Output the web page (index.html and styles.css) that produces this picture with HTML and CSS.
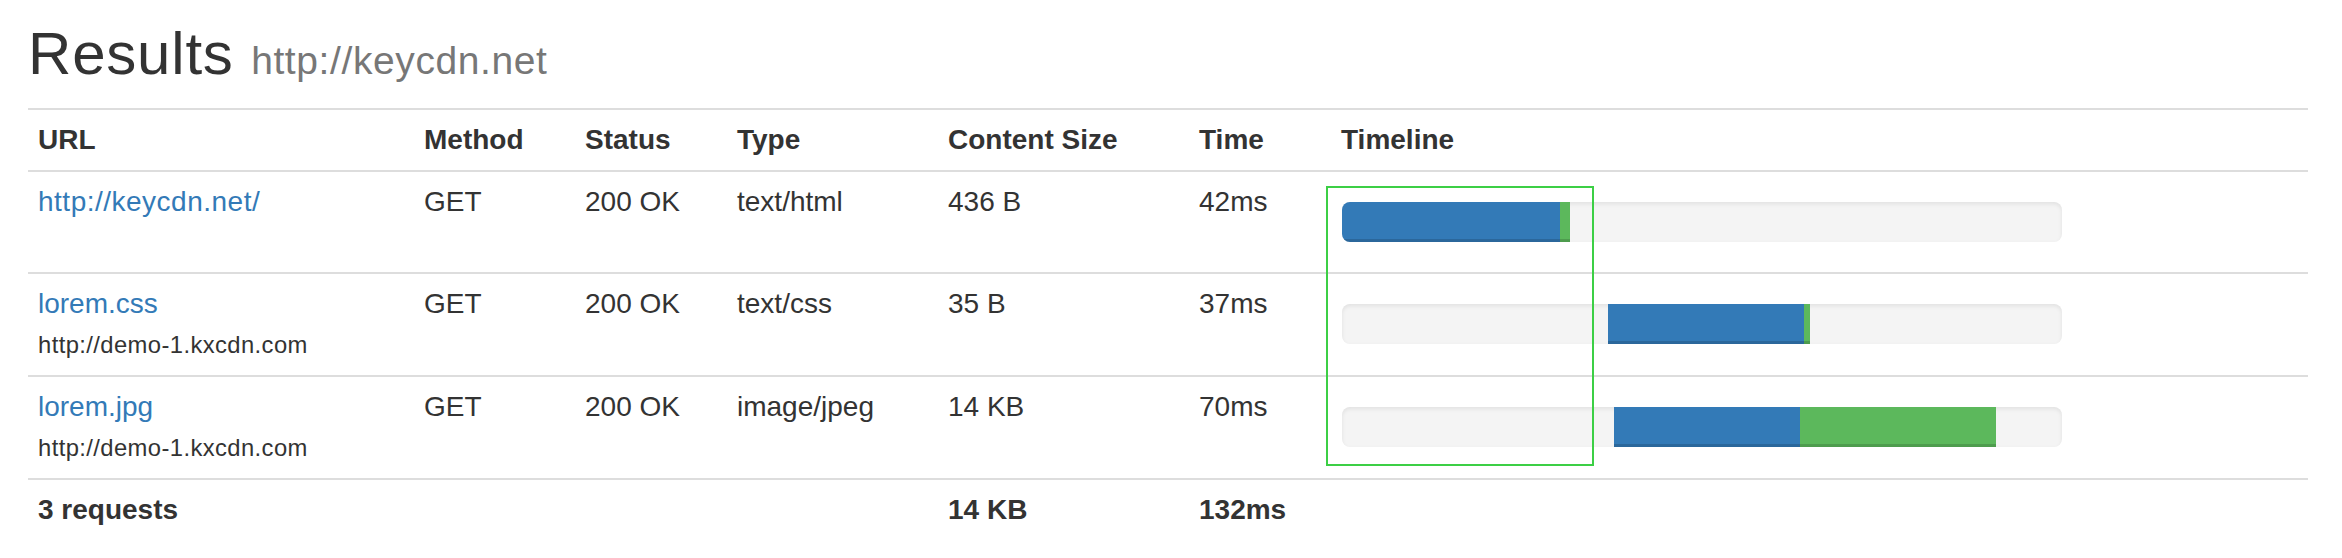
FILE: index.html
```html
<!DOCTYPE html>
<html lang="en">
<head>
<meta charset="utf-8">
<title>Results</title>
<link rel="stylesheet" href="styles.css">
</head>
<body>
<div class="page">
  <h2 class="title">Results <small class="title-url">http://keycdn.net</small></h2>
  <table class="results">
    <thead>
      <tr>
        <th class="c-url">URL</th>
        <th class="c-method">Method</th>
        <th class="c-status">Status</th>
        <th class="c-type">Type</th>
        <th class="c-size">Content Size</th>
        <th class="c-time">Time</th>
        <th class="c-timeline">Timeline</th>
      </tr>
    </thead>
    <tbody>
      <tr>
        <td><a href="#" class="main-url">http://keycdn.net/</a></td>
        <td>GET</td>
        <td>200 OK</td>
        <td>text/html</td>
        <td>436 B</td>
        <td>42ms</td>
        <td>
          <div class="progress">
            <div class="bar bar-blue" style="width:30.28%"></div>
            <div class="bar bar-green" style="width:1.39%"></div>
          </div>
        </td>
      </tr>
      <tr>
        <td><a href="#">lorem.css</a><br><small class="host">http://demo-1.kxcdn.com</small></td>
        <td>GET</td>
        <td>200 OK</td>
        <td>text/css</td>
        <td>35 B</td>
        <td>37ms</td>
        <td>
          <div class="progress">
            <div class="bar bar-offset" style="width:36.94%"></div>
            <div class="bar bar-blue" style="width:27.22%"></div>
            <div class="bar bar-green" style="width:0.83%"></div>
          </div>
        </td>
      </tr>
      <tr>
        <td><a href="#">lorem.jpg</a><br><small class="host">http://demo-1.kxcdn.com</small></td>
        <td>GET</td>
        <td>200 OK</td>
        <td>image/jpeg</td>
        <td>14 KB</td>
        <td>70ms</td>
        <td>
          <div class="progress">
            <div class="bar bar-offset" style="width:37.78%"></div>
            <div class="bar bar-blue" style="width:25.83%"></div>
            <div class="bar bar-green" style="width:27.22%"></div>
          </div>
        </td>
      </tr>
    </tbody>
    <tfoot>
      <tr>
        <td>3 requests</td>
        <td></td>
        <td></td>
        <td></td>
        <td>14 KB</td>
        <td>132ms</td>
        <td></td>
      </tr>
    </tfoot>
  </table>
  <div class="selection"></div>
</div>
</body>
</html>
```

FILE: styles.css
```css
html, body {
  margin: 0;
  padding: 0;
  background: #fff;
}

body {
  font-family: "Liberation Sans", Arial, Helvetica, sans-serif;
  font-size: 28px;
  line-height: 40px;
  color: #333;
}

.page {
  position: relative;
  padding: 21px 34px 0 28px;
}

.title {
  margin: 0 0 21px;
  height: 66px;
  font-size: 60px;
  line-height: 66px;
  font-weight: 500;
  color: #333;
  letter-spacing: 0.8px;
}

.title-url {
  font-size: 39px;
  line-height: 1;
  font-weight: 400;
  color: #777;
  letter-spacing: 0.6px;
}

.results {
  width: 2280px;
  table-layout: fixed;
  border-collapse: separate;
  border-spacing: 0;
}

.results th,
.results td {
  box-sizing: border-box;
  padding: 10px;
  border-top: 2px solid #ddd;
  text-align: left;
  vertical-align: top;
  line-height: 40px;
}

.results th {
  font-weight: 700;
}

.results tfoot td {
  font-weight: 700;
}

.c-url { width: 386px; }
.c-method { width: 161px; }
.c-status { width: 152px; }
.c-type { width: 211px; }
.c-size { width: 251px; }
.c-time { width: 142px; }
.c-timeline { width: 977px; }

.results a {
  color: #337ab7;
  text-decoration: none;
}

.main-url {
  letter-spacing: 0.5px;
}

.host {
  font-size: 85%;
  color: #333;
  letter-spacing: 0.4px;
}

.progress {
  display: flex;
  width: 720px;
  height: 40px;
  margin: 20px 0 20px 1px;
  overflow: hidden;
  background: #f4f4f4;
  border-radius: 8px;
  box-shadow: inset 0 2px 4px rgba(0, 0, 0, 0.08);
}

.bar {
  height: 100%;
  flex: none;
}

.bar-offset {
  background: transparent;
}

.bar-blue {
  background: #337ab7;
  box-shadow: inset 0 -3px 0 rgba(0, 0, 0, 0.15);
}

.bar-green {
  background: #5cb85c;
  box-shadow: inset 0 -3px 0 rgba(0, 0, 0, 0.15);
}

.selection {
  position: absolute;
  left: 1326px;
  top: 186px;
  width: 268px;
  height: 280px;
  box-sizing: border-box;
  border: 2px solid #3ccf45;
}
```
